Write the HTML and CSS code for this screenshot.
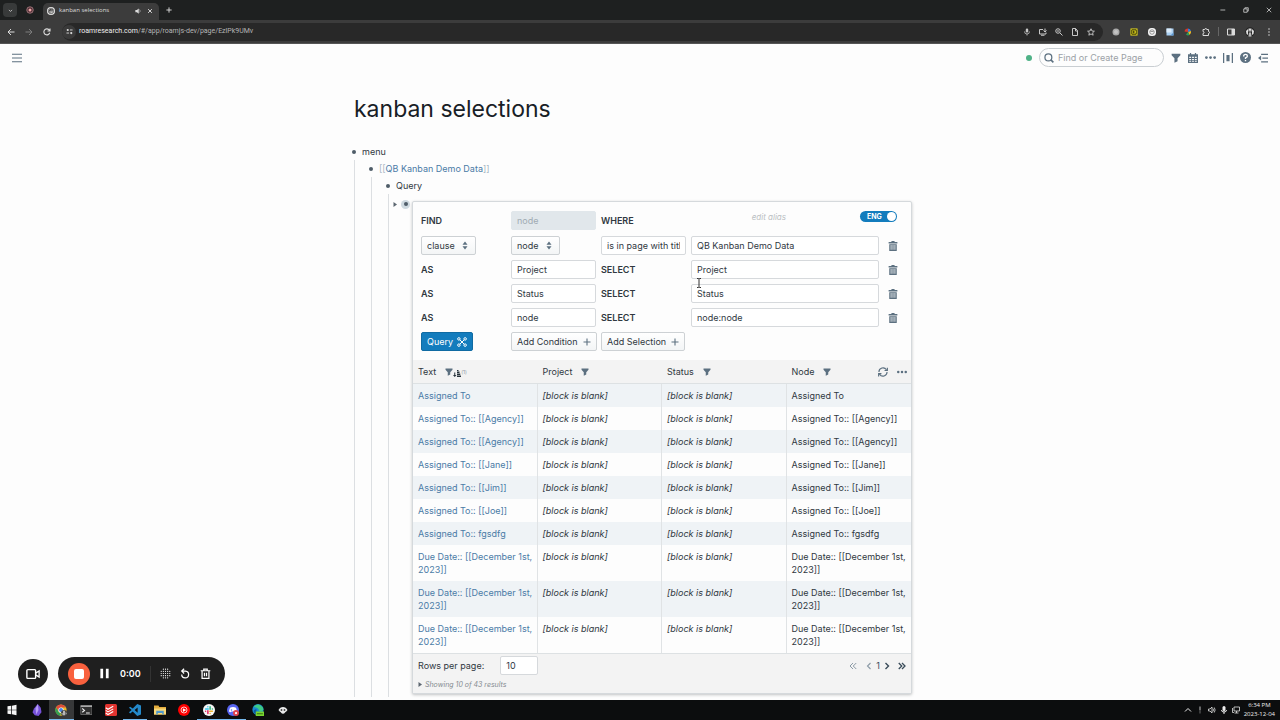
FILE: index.html
```html
<!DOCTYPE html>
<html lang="en">
<head>
<meta charset="utf-8">
<title>kanban selections</title>
<link rel="stylesheet" href="styles.css">
</head>
<body>
<svg class="defs" aria-hidden="true">
  <symbol id="filter" viewBox="0 0 16 16"><path fill="currentColor" d="M1 1h14v2.500L10.500 8.500V13l-5 2.500V8.500L1 3.500z"/></symbol>
  <symbol id="more" viewBox="0 0 16 16"><g fill="currentColor"><circle cx="2" cy="8" r="2"/><circle cx="8" cy="8" r="2"/><circle cx="14" cy="8" r="2"/></g></symbol>
  <symbol id="trash" viewBox="0 0 16 16"><path fill="currentColor" fill-rule="evenodd" d="M5.500 0h5v1.500H15V4H1V1.500h4.500zM2 5h12v11H2zM4.300 6.500v7.500h1.200V6.500zm3.100 0v7.500h1.200V6.500zm3.100 0v7.500h1.200V6.500z"/></symbol>
  <symbol id="updown" viewBox="0 0 10 16"><path fill="currentColor" d="M5 1l4.500 5.500h-9zM5 15L.5 9.500h9z"/></symbol>
  <symbol id="plus" viewBox="0 0 16 16"><path fill="none" stroke="currentColor" stroke-width="2.200" d="M8 1v14M1 8h14"/></symbol>
  <symbol id="left" viewBox="0 0 16 16"><path fill="none" stroke="currentColor" stroke-width="2.200" d="M11 2L5 8l6 6"/></symbol>
  <symbol id="right" viewBox="0 0 16 16"><path fill="none" stroke="currentColor" stroke-width="2.800" d="M5 2l6 6-6 6"/></symbol>
  <symbol id="dleft" viewBox="0 0 16 16"><path fill="none" stroke="currentColor" stroke-width="2" d="M8 2L2 8l6 6M14.500 2l-6 6 6 6"/></symbol>
  <symbol id="dright" viewBox="0 0 16 16"><path fill="none" stroke="currentColor" stroke-width="2.600" d="M1.500 2l6 6-6 6M8 2l6 6-6 6"/></symbol>
  <symbol id="caret" viewBox="0 0 8 10"><path fill="currentColor" d="M1 0l7 5-7 5z"/></symbol>
</svg>

<header class="browser">
  <div class="tabs">
    <button class="tab-search" aria-label="Search tabs"><svg viewBox="0 0 16 16"><path fill="none" stroke="currentColor" stroke-width="2.500" d="M3 6l5 5 5-5"/></svg></button>
    <svg class="pinned" viewBox="0 0 16 16"><circle cx="8" cy="8" r="6.500" fill="#4d2c32" stroke="#b98b90" stroke-width="1.500"/><circle cx="8" cy="8" r="3" fill="#f1a5a8"/></svg>
    <div class="tab">
      <svg class="favicon" viewBox="0 0 16 16"><circle cx="8" cy="8" r="8" fill="#e8e8e8"/><circle cx="8" cy="8" r="5.500" fill="none" stroke="#555" stroke-width="1.500"/><path stroke="#222" stroke-width="1.500" fill="none" d="M4 6h8M6 6v6M10 4v7M4 9l4-5"/></svg>
      <span class="tab-title">kanban selections</span>
      <svg class="ico-xs" viewBox="0 0 16 16"><path fill="currentColor" d="M1 5h4l5-4v14l-5-4H1z"/><path fill="none" stroke="currentColor" stroke-width="1.500" d="M12 4q4 4 0 8"/></svg>
      <button class="tab-close" aria-label="Close tab"><svg viewBox="0 0 16 16"><path stroke="currentColor" stroke-width="2.500" d="M3 3l10 10M13 3L3 13"/></svg></button>
    </div>
    <button class="tab-new" aria-label="New tab"><svg viewBox="0 0 16 16"><path stroke="currentColor" stroke-width="2.500" d="M8 1v14M1 8h14"/></svg></button>
    <div class="window-buttons">
      <button aria-label="Minimize"><svg viewBox="0 0 16 16"><path stroke="currentColor" stroke-width="2" d="M1 8h13"/></svg></button>
      <button aria-label="Restore"><svg viewBox="0 0 16 16"><path fill="none" stroke="currentColor" stroke-width="2" d="M2 5h9v9H2zM5 5V2h9v9h-3"/></svg></button>
      <button aria-label="Close"><svg viewBox="0 0 16 16"><path stroke="currentColor" stroke-width="2" d="M2 2l12 12M14 2L2 14"/></svg></button>
    </div>
  </div>
  <div class="toolbar">
    <div class="nav">
      <button aria-label="Back"><svg viewBox="0 0 16 16"><path fill="none" stroke="currentColor" stroke-width="2" d="M15 8H2M8 2L2 8l6 6"/></svg></button>
      <button class="dim" aria-label="Forward"><svg viewBox="0 0 16 16"><path fill="none" stroke="currentColor" stroke-width="2" d="M1 8h13M8 2l6 6-6 6"/></svg></button>
      <button aria-label="Reload"><svg viewBox="0 0 16 16"><path fill="none" stroke="currentColor" stroke-width="2.200" d="M13.500 9.500A6 6 0 1 1 12 3.500L14 6M14 1v5H9"/></svg></button>
    </div>
    <div class="urlbar">
      <span class="site"><svg viewBox="0 0 16 16"><path stroke="currentColor" stroke-width="2" d="M9 4.500h6M1 11.500h6"/><circle cx="4" cy="4.500" r="2.500" fill="currentColor"/><circle cx="12" cy="11.500" r="2.500" fill="currentColor"/></svg></span>
      <span class="url"><b>roamresearch.com</b>/#/app/roamjs-dev/page/EzlPk9UMv</span>
      <div class="url-icons">
        <svg viewBox="0 0 16 16"><rect x="5.500" y="1" width="5" height="8" rx="2.500" fill="currentColor"/><path fill="none" stroke="currentColor" stroke-width="1.500" d="M3 7q0 5 5 5t5-5M8 12v3"/></svg>
        <svg viewBox="0 0 16 16"><path fill="none" stroke="currentColor" stroke-width="2" d="M8 3H1v9h13V9M4 14.500h7M12 1v6M9 5l3 3 3-3"/></svg>
        <svg viewBox="0 0 16 16"><path fill="none" stroke="currentColor" stroke-width="2" d="M9.500 9.500L15 15M4 6h4"/><circle cx="6" cy="6" r="4.500" fill="none" stroke="currentColor" stroke-width="2"/></svg>
        <svg viewBox="0 0 16 16"><path fill="none" stroke="currentColor" stroke-width="2" d="M3 1h6l4 4v10H3zM9 1v5h4"/></svg>
        <svg viewBox="0 0 16 16"><path fill="none" stroke="currentColor" stroke-width="1.800" d="M8 1.500l2 4.500 4.800.4-3.600 3.200 1.100 4.800L8 11.900l-4.300 2.500 1.100-4.800L1.200 6.400 6 6z"/></svg>
      </div>
    </div>
    <div class="extensions">
      <svg viewBox="0 0 16 16"><circle cx="8" cy="8" r="7" fill="#aaa"/><circle cx="8" cy="8" r="4" fill="#c4c4c4"/></svg>
      <svg viewBox="0 0 16 16"><path fill="#f2e61c" d="M1 1h14v14H1z"/><path fill="none" stroke="#29280a" stroke-width="1.800" d="M3.500 3.500h9v9h-9zM6.500 5v6M7 8l3-3M7 8l3 3"/></svg>
      <svg viewBox="0 0 16 16"><rect width="16" height="16" rx="7" fill="#f4f4f4"/><circle cx="8" cy="8" r="4.500" fill="none" stroke="#777" stroke-width="1.500"/><path stroke="#777" stroke-width="1.500" d="M5 7h6"/></svg>
      <svg viewBox="0 0 16 16"><path fill="#a9cff2" d="M1 1h14v14H1z"/><path fill="#dcecfb" d="M1 1h10v8H1z"/><path fill="#5793cf" d="M9 15l6-6v6z"/></svg>
      <svg viewBox="0 0 16 16"><path fill="#d8382c" d="M1 7a7 7 0 0 1 7-6v7z"/><path fill="#2f7de1" d="M8 1a7 7 0 0 1 6 5L8 8z"/><path fill="#f4bd22" d="M14 6q1 5-3 8L8 8z"/><path fill="#2e9d57" d="M11 14q-4 2-7-1l4-5z"/></svg>
      <svg viewBox="0 0 16 16"><path fill="none" stroke="currentColor" stroke-width="2" d="M2 3h3.500a2 2 0 0 1 4 0H13v4a2 2 0 0 1 0 4v4H2v-4a2 2 0 0 0 0-4z"/></svg>
      <span class="divider"></span>
      <svg viewBox="0 0 16 16"><path fill="none" stroke="currentColor" stroke-width="2" d="M1 2h14v12H1z"/><path fill="currentColor" d="M9 2h6v12H9z"/></svg>
      <svg class="avatar" viewBox="0 0 20 20"><circle cx="10" cy="10" r="9.500" fill="#202020"/><path fill="#ddd" d="M7 3h6v6H7zM2 8l4-4v12l-3-2zM14 4l4 4-1 6-3 2zM8 11h4l1 8H7z"/><path fill="#444" d="M9.500 6h1v12h-1z"/></svg>
      <svg viewBox="0 0 16 16"><g fill="currentColor"><circle cx="8" cy="2" r="1.500"/><circle cx="8" cy="8" r="1.500"/><circle cx="8" cy="14" r="1.500"/></g></svg>
    </div>
  </div>
</header>

<div class="page">
  <nav class="topbar">
    <button aria-label="Open menu"><svg viewBox="0 0 16 16"><path stroke="currentColor" stroke-width="1.800" d="M0 2h16M0 8h16M0 14h16"/></svg></button>
    <div class="topbar-right">
      <span class="status-dot"></span>
      <label class="search"><svg viewBox="0 0 16 16"><circle cx="7" cy="7" r="5.500" fill="none" stroke="currentColor" stroke-width="2"/><path stroke="currentColor" stroke-width="2.500" d="M11 11l4 4"/></svg><input type="text" placeholder="Find or Create Page" aria-label="Find or Create Page"></label>
      <button aria-label="Filter"><svg><use href="#filter"/></svg></button>
      <button aria-label="Calendar"><svg viewBox="0 0 16 16"><path fill="currentColor" fill-rule="evenodd" d="M0 2h3V0h2v2h6V0h2v2h3v14H0zM2 6v2h3V6zm4.500 0v2h3V6zM11 6v2h3V6zM2 9.500v1.500h3V9.500zm4.500 0v1.500h3V9.500zm4.500 0v1.500h3V9.500zM2 12.500V14h3v-1.500zm4.500 0V14h3v-1.500zm4.500 0V14h3v-1.500z"/></svg></button>
      <button class="wide" aria-label="More"><svg><use href="#more"/></svg></button>
      <button aria-label="Distribute"><svg viewBox="0 0 16 16"><path fill="currentColor" d="M0 0h2v16H0zM14 0h2v16h-2zM5.500 3h5v10h-5z"/></svg></button>
      <button class="wide" aria-label="Help"><svg viewBox="0 0 16 16"><circle cx="8" cy="8" r="8" fill="currentColor"/><path fill="none" stroke="#fff" stroke-width="2" d="M5.300 6.500q0-3 2.700-3t2.700 2.300Q10.700 7.500 8 8.500v1.500M8 11.500v2"/></svg></button>
      <button aria-label="Open right sidebar"><svg viewBox="0 0 16 16"><path fill="none" stroke="currentColor" stroke-width="2" d="M5 2h11M7 8h9M5 14h11"/><path fill="currentColor" d="M0 8l5-4v8z"/></svg></button>
    </div>
  </nav>

  <main class="article">
    <h1>kanban selections</h1>
    <ul class="blocks">
      <li>
        <div class="block"><span class="bullet"></span>menu</div>
        <ul>
          <li>
            <div class="block"><span class="bullet"></span><span><span class="brackets">[[</span><a href="#">QB Kanban Demo Data</a><span class="brackets">]]</span></span></div>
            <ul>
              <li>
                <div class="block"><span class="bullet"></span>Query</div>
                <ul class="query-children">
                  <li class="query-block">
                    <div class="handle"><svg class="caret"><use href="#caret"/></svg><span class="halo"><span class="bullet"></span></span></div>
                    <section class="panel">
                      <form class="builder">
                        <b>FIND</b>
                        <input type="text" value="node" disabled aria-label="Find">
                        <b>WHERE</b>
                        <div class="alias-row"><span class="alias">edit alias</span><label class="switch"><input type="checkbox" checked><span>ENG</span></label></div>

                        <span class="select"><select aria-label="Condition type"><option>clause</option></select><svg><use href="#updown"/></svg></span>
                        <span class="select"><select aria-label="Source"><option>node</option></select><svg><use href="#updown"/></svg></span>
                        <input type="text" value="is in page with title" aria-label="Relation">
                        <input type="text" value="QB Kanban Demo Data" aria-label="Target">
                        <button type="button" class="trash" aria-label="Delete"><svg><use href="#trash"/></svg></button>

                        <b>AS</b><input type="text" value="Project" aria-label="As"><b>SELECT</b>
                        <div class="field"><input type="text" value="Project" aria-label="Select"><svg class="ibeam" viewBox="0 0 6 10"><path fill="none" stroke="#333" d="M1 .5h1.500l.5.500.5-.5H5M3 1v8M1 9.500h1.500L3 9l.5.500H5"/></svg></div>
                        <button type="button" class="trash" aria-label="Delete"><svg><use href="#trash"/></svg></button>

                        <b>AS</b><input type="text" value="Status" aria-label="As"><b>SELECT</b><input type="text" value="Status" aria-label="Select">
                        <button type="button" class="trash" aria-label="Delete"><svg><use href="#trash"/></svg></button>

                        <b>AS</b><input type="text" value="node" aria-label="As"><b>SELECT</b><input type="text" value="node:node" aria-label="Select">
                        <button type="button" class="trash" aria-label="Delete"><svg><use href="#trash"/></svg></button>

                        <button type="button" class="btn primary">Query <svg viewBox="0 0 16 16"><g fill="none" stroke="currentColor" stroke-width="1.600"><circle cx="3" cy="3" r="2"/><circle cx="13" cy="3" r="2"/><circle cx="3" cy="13" r="2"/><circle cx="13" cy="13" r="2"/><path d="M4.500 4.500l7 7M11.500 4.500l-7 7"/></g></svg></button>
                        <button type="button" class="btn">Add Condition <svg><use href="#plus"/></svg></button>
                        <button type="button" class="btn">Add Selection <svg><use href="#plus"/></svg></button>
                      </form>
                      <table class="results">
                        <thead>
                          <tr>
                            <th><div class="head">Text <span class="sort"><svg><use href="#filter"/></svg><svg class="sort-icon" viewBox="0 0 16 16"><path fill="#26323b" d="M2.500 7h2v5h2.500l-3.500 4L0 12h2.500zM8 13h8v3H8zM8 9h6.500v3H8zM8 5h5v3H8zM8 2h3v2H8z"/></svg><small>(1)</small></span></div></th>
                            <th><div class="head">Project <svg><use href="#filter"/></svg></div></th>
                            <th><div class="head">Status <svg><use href="#filter"/></svg></div></th>
                            <th><div class="head">Node <svg><use href="#filter"/></svg><span class="table-tools"><button type="button" aria-label="Refresh"><svg viewBox="0 0 16 16"><path fill="none" stroke="currentColor" stroke-width="1.800" d="M1.500 8A6.500 6.500 0 0 1 13.500 4.500M14.500 8A6.500 6.500 0 0 1 2.500 11.500M15 1v4.500h-4.500M1 15v-4.500h4.500"/></svg></button><button type="button" aria-label="More"><svg><use href="#more"/></svg></button></span></div></th>
                          </tr>
                        </thead>
                        <tbody>
                          <tr><td><a href="#">Assigned To</a></td><td><i>[block is blank]</i></td><td><i>[block is blank]</i></td><td>Assigned To</td></tr>
                          <tr><td><a href="#">Assigned To:: [[Agency]]</a></td><td><i>[block is blank]</i></td><td><i>[block is blank]</i></td><td>Assigned To:: [[Agency]]</td></tr>
                          <tr><td><a href="#">Assigned To:: [[Agency]]</a></td><td><i>[block is blank]</i></td><td><i>[block is blank]</i></td><td>Assigned To:: [[Agency]]</td></tr>
                          <tr><td><a href="#">Assigned To:: [[Jane]]</a></td><td><i>[block is blank]</i></td><td><i>[block is blank]</i></td><td>Assigned To:: [[Jane]]</td></tr>
                          <tr><td><a href="#">Assigned To:: [[Jim]]</a></td><td><i>[block is blank]</i></td><td><i>[block is blank]</i></td><td>Assigned To:: [[Jim]]</td></tr>
                          <tr><td><a href="#">Assigned To:: [[Joe]]</a></td><td><i>[block is blank]</i></td><td><i>[block is blank]</i></td><td>Assigned To:: [[Joe]]</td></tr>
                          <tr><td><a href="#">Assigned To:: fgsdfg</a></td><td><i>[block is blank]</i></td><td><i>[block is blank]</i></td><td>Assigned To:: fgsdfg</td></tr>
                          <tr><td><a href="#">Due Date:: [[December 1st, 2023]]</a></td><td><i>[block is blank]</i></td><td><i>[block is blank]</i></td><td>Due Date:: [[December 1st, 2023]]</td></tr>
                          <tr><td><a href="#">Due Date:: [[December 1st, 2023]]</a></td><td><i>[block is blank]</i></td><td><i>[block is blank]</i></td><td>Due Date:: [[December 1st, 2023]]</td></tr>
                          <tr><td><a href="#">Due Date:: [[December 1st, 2023]]</a></td><td><i>[block is blank]</i></td><td><i>[block is blank]</i></td><td>Due Date:: [[December 1st, 2023]]</td></tr>
                        </tbody>
                      </table>
                      <footer class="panel-foot">
                        <div class="paging">
                          <label for="rows">Rows per page:</label>
                          <input id="rows" type="text" value="10">
                          <div class="pager">
                            <button type="button" class="off first" aria-label="First page"><svg><use href="#dleft"/></svg></button>
                            <button type="button" class="off" aria-label="Previous page"><svg><use href="#left"/></svg></button>
                            <span>1</span>
                            <button type="button" aria-label="Next page"><svg><use href="#right"/></svg></button>
                            <button type="button" class="last" aria-label="Last page"><svg><use href="#dright"/></svg></button>
                          </div>
                        </div>
                        <div class="summary"><svg class="caret"><use href="#caret"/></svg><i>Showing 10 of 43 results</i></div>
                      </footer>
                    </section>
                  </li>
                </ul>
              </li>
            </ul>
          </li>
        </ul>
      </li>
    </ul>
  </main>

  <div class="recorder">
    <button class="camera" aria-label="Camera"><svg viewBox="0 0 16 16"><rect x="1" y="3" width="10" height="10" rx="1" fill="none" stroke="currentColor" stroke-width="1.600"/><path fill="none" stroke="currentColor" stroke-width="1.500" d="M11 7l4-2.500v7L11 9"/></svg></button>
    <div class="record-bar">
      <button class="stop" aria-label="Stop recording"><span></span></button>
      <button class="pause" aria-label="Pause"><svg viewBox="0 0 16 16"><path fill="currentColor" d="M2 1h4v14H2zM10 1h4v14h-4z"/></svg></button>
      <span class="time">0:00</span>
      <span class="split"></span>
      <button aria-label="Effects"><svg viewBox="0 0 18 18"><path fill="none" stroke="currentColor" stroke-width="2" stroke-linecap="round" stroke-dasharray="0 3.500" d="M5.500 2h8M2 5.500h15M2 9h15M2 12.500h15M5.500 16h8"/></svg></button>
      <button aria-label="Restart"><svg viewBox="0 0 16 16"><path fill="none" stroke="currentColor" stroke-width="1.800" d="M3 4.500h5a5 5 0 1 1-5.500 5M6 1L2.500 4.500 6 8"/></svg></button>
      <button aria-label="Discard"><svg viewBox="0 0 16 16"><path fill="none" stroke="currentColor" stroke-width="1.800" d="M1 4h14M5.500 4V1.500h5V4M3 4v11h10V4M6.500 7v5M9.500 7v5"/></svg></button>
    </div>
  </div>
</div>

<footer class="taskbar">
  <div class="apps">
    <button aria-label="Start"><svg viewBox="0 0 16 16"><path fill="#f5f5f5" d="M2 3l5-.7v5.300H2zM8 2.200L14 1v6.600H8zM2 8.400h5v5.300L2 13zM8 8.400h6V15l-6-1.200z"/></svg></button>
    <button aria-label="Obsidian"><svg viewBox="0 0 16 16"><path fill="#7650d8" d="M9 0l4 5 1 6-4 5-5-1-3-4 2-5z"/><path fill="#b49bf5" d="M9 0L6 6l1 8 3-6z"/></svg></button>
    <button class="active open" aria-label="Chrome"><svg viewBox="0 0 16 16"><circle cx="8" cy="8" r="7.500" fill="#e8b92a"/><path fill="#de4b3b" d="M1.500 4.200A7.500 7.500 0 0 1 14.500 4.500H8L4.700 9.800z"/><path fill="#35a153" d="M1.300 4.500L6 11.500l2 1-1.500 3A7.500 7.500 0 0 1 1.300 4.500z"/><circle cx="8" cy="8" r="3.500" fill="#fff"/><circle cx="8" cy="8" r="2.600" fill="#4285e8"/><circle cx="12" cy="12" r="4" fill="#444"/><path fill="#ddd" d="M11 9h2v6h-2zM8.500 12h1.500v3zM14 11l1.500 1-1 3z"/></svg></button>
    <button aria-label="Terminal"><svg viewBox="0 0 16 16"><path fill="#303030" stroke="#777" d="M1 2h15v12H1z"/><path fill="#aaa" d="M1 2h15v2H1z"/><path fill="none" stroke="#eee" stroke-width="1.500" d="M3 6l3 2.500L3 11M8 12h5"/></svg></button>
    <button aria-label="Todoist"><svg viewBox="0 0 16 16"><rect width="16" height="16" rx="2" fill="#e2332f"/><path fill="none" stroke="#fff" stroke-width="1.500" d="M1 5l3 2 7-4M1 8.500l3 2 7-4M1 12l3 2 7-4"/></svg></button>
    <button class="open" aria-label="Visual Studio Code"><svg viewBox="0 0 16 16"><path fill="#2489ca" fill-rule="evenodd" d="M11 0l5 2v12l-5 2-6-6-3.500 2.500L0 11l3.500-3L0 5l1.500-1.500L5 6zM11.500 4.500L7.500 8l4 3.500z"/></svg></button>
    <button aria-label="File Explorer"><svg viewBox="0 0 16 16"><path fill="#e3ac3d" d="M0 2h6l1 2h9v10H0z"/><path fill="#f8d879" d="M0 6h16v8H0z"/><path fill="#4d98ce" d="M3 9h10v5h-2v-2H5v2H3z"/></svg></button>
    <button aria-label="YouTube Music"><svg viewBox="0 0 16 16"><circle cx="8" cy="8" r="8" fill="#f00"/><circle cx="8" cy="8" r="4" fill="none" stroke="#fff"/><path fill="#fff" d="M6.500 5.500L11 8l-4.500 2.500z"/></svg></button>
    <button class="open" aria-label="Slack"><svg viewBox="0 0 16 16"><circle cx="8" cy="8" r="8" fill="#f7f7f7"/><g fill="none" stroke-width="2" stroke-linecap="round"><path stroke="#36c5f0" d="M3.500 6.500H7M6.500 3.500v.1"/><path stroke="#2eb67d" d="M9.500 3.500V7M12.500 6.500v.1"/><path stroke="#ecb22e" d="M12.500 9.500H9M9.500 12.500v.1"/><path stroke="#e01e5a" d="M6.500 12.500V9M3.500 9.500v.1"/></g></svg></button>
    <button class="open" aria-label="Discord"><svg viewBox="0 0 16 16"><circle cx="8" cy="8" r="8" fill="#5865f2"/><path fill="#fff" d="M4 5q4-2 8 0l1.500 5-2.500 1-1-1H6l-1 1-2.500-1z"/><circle cx="6" cy="8" r="1" fill="#5865f2"/><circle cx="12" cy="12" r="4" fill="#e0434b"/><circle cx="12" cy="12" r="1.500" fill="#fff"/></svg></button>
    <button aria-label="Edge"><svg viewBox="0 0 16 16"><circle cx="8" cy="7.500" r="7.500" fill="#1b8bd0"/><path fill="#3ecb84" d="M2 4q6-7 12 0 3 5-2 6-4 0-3-3-2-3-7-3z"/><path fill="#0b59a3" d="M6 7q-1 5 4 7-6 1-8-4 0-3 4-3z"/><path fill="#79d42f" d="M5 10h11v6H5z"/><path stroke="#24520f" d="M6.500 13h8"/></svg></button>
    <button aria-label="Roam"><svg viewBox="0 0 16 16"><path fill="#e8e8e8" d="M2 8q2-4 6-4t6 4q-1 2-3 3-3 4-6 0-2-1-3-3z"/><path fill="#222" d="M5 7h2v2H5zM9 7h2v2H9z"/></svg></button>
  </div>
  <div class="tray">
    <svg viewBox="0 0 16 16"><path fill="none" stroke="currentColor" stroke-width="2" d="M2 11l6-6 6 6"/></svg>
    <svg class="dim" viewBox="0 0 16 16"><path fill="currentColor" d="M6 1h4v8H6zM7 10h2v5H7z"/></svg>
    <svg viewBox="0 0 16 16"><path fill="none" stroke="currentColor" stroke-width="1.500" d="M1 6h3l4-4v12l-4-4H1zM10 5q2 3 0 6M12.500 3q3.500 5 0 10"/></svg>
    <svg viewBox="0 0 16 16"><rect x="5" y="0" width="6" height="10" rx="3" fill="currentColor"/><path fill="none" stroke="currentColor" stroke-width="2" d="M3 8q0 4 5 4t5-4M8 12v4"/></svg>
    <svg viewBox="0 0 16 16"><path fill="none" stroke="currentColor" stroke-width="1.500" d="M4 2h11v8H4zM9 10v4M5 14h8M1 4v9h3"/></svg>
    <div class="clock"><time>6:34 PM</time><time>2023-12-04</time></div>
  </div>
</footer>
</body>
</html>
```
FILE: styles.css
```css
* { box-sizing: border-box; }
body {
  margin: 0;
  height: 100vh;
  display: flex;
  flex-direction: column;
  overflow: hidden;
  font: 9px/13px Inter, "Liberation Sans", sans-serif;
  color: #30383f;
  background: #fdfdfd;
}
button, input, select { font: inherit; color: inherit; margin: 0; }
button { border: 0; padding: 0; background: none; display: flex; align-items: center; justify-content: center; }
svg { display: block; width: 10px; height: 10px; flex: none; }
a { color: #4a7ba6; text-decoration: none; }
ul { list-style: none; margin: 0; padding: 0; }
.defs { position: absolute; width: 0; height: 0; }

/* Browser chrome */
.browser { background: #1e2020; color: #dcdcdc; font-family: "Open Sans", sans-serif; border-bottom: 1px solid #555; }
.tabs { height: 20px; display: flex; align-items: center; padding-left: 3px; }
.tab-search { width: 14px; height: 14px; border-radius: 4px; background: #383a3a; }
.tab-search svg { width: 5px; height: 5px; }
.pinned { width: 8px; height: 8px; margin: 0 9px; }
.tab { align-self: flex-end; width: 116px; height: 17px; display: flex; align-items: center; gap: 4px; padding: 0 4px 2px; background: #3c3c3c; border-radius: 5px 5px 0 0; }
.favicon { width: 8px; height: 8px; }
.tab-title { font-size: 6px; flex: 1; white-space: nowrap; }
.ico-xs { width: 6px; height: 6px; }
.tab-close { width: 10px; height: 10px; }
.tab-close svg, .tab-new svg, .window-buttons svg { width: 6px; height: 6px; }
.tab-new { width: 20px; height: 20px; }
.window-buttons { margin-left: auto; display: flex; }
.window-buttons button { width: 23px; height: 20px; }
.toolbar { height: 23px; background: #3c3c3c; display: flex; align-items: center; gap: 6px; padding: 0 7px 0 2px; }
.nav { display: flex; }
.nav button { width: 18px; height: 18px; }
.nav svg { width: 8px; height: 8px; }
.dim { opacity: .4; }
.urlbar { flex: 1; height: 18px; border-radius: 9px; background: #282828; display: flex; align-items: center; gap: 3px; padding: 0 8px 0 0; }
.site { width: 14px; height: 14px; border-radius: 7px; background: #3a3a3a; display: flex; align-items: center; justify-content: center; }
.site svg { width: 7px; height: 7px; }
.url { flex: 1; font-family: Roboto, sans-serif; font-size: 7px; color: #b5b5b5; }
.url b { font-weight: 400; color: #efefef; }
.url-icons { display: flex; gap: 8px; color: #c8c8c8; }
.url-icons svg, .extensions svg { width: 8px; height: 8px; }
.extensions { display: flex; align-items: center; gap: 10px; padding-left: 3px; }
.extensions .avatar { width: 10px; height: 10px; }
.divider { width: 1px; height: 9px; background: #666; margin: 0 -2px; }

/* Page */
.page { flex: 1; min-height: 0; display: flex; flex-direction: column; position: relative; overflow: hidden; }
.topbar { height: 27px; flex: none; display: flex; align-items: center; justify-content: space-between; padding: 0 12px; color: #5c7080; }
.topbar-right { display: flex; align-items: center; gap: 7px; }
.topbar .wide svg { width: 11px; height: 11px; }
.status-dot { width: 6px; height: 6px; border-radius: 3px; background: #4fb287; }
.search { width: 125px; height: 19px; border: 1px solid #c9ced2; border-radius: 10px; display: flex; align-items: center; gap: 4px; padding: 0 4px; }
.search input { width: 100%; min-width: 0; border: 0; padding: 0; background: none; outline: 0; }
.search input::placeholder { color: #9ba1a6; opacity: 1; }
.article { flex: 1; width: 100%; max-width: 576px; margin: 0 auto; padding-right: 16px; }
h1 { margin: 0; padding: 22px 2px 18px; font-size: 23px; line-height: 32px; font-weight: 400; color: #182026; }
.block { height: 17px; display: flex; align-items: center; gap: 6px; }
.bullet { flex: none; width: 4px; height: 4px; border-radius: 2px; background: #4f5d68; }
.blocks ul { margin-left: 2px; padding-left: 14px; border-left: 1px solid #dcdfe2; }
.blocks .query-children { padding-left: 4px; padding-bottom: 3px; }
.brackets { color: #a7b6c2; }
.query-block { display: flex; padding-top: 7px; gap: 2px; }
.handle { display: flex; align-items: center; align-self: flex-start; gap: 4px; height: 6px; }
.caret { width: 4px; height: 5px; color: #5c6670; }
.halo { width: 9px; height: 9px; border-radius: 5px; background: #ced9e0; display: flex; align-items: center; justify-content: center; }

/* Query builder */
.panel { flex: 1; min-width: 0; border: 1px solid #d5d9dc; border-radius: 2px; background: #fdfdfd; box-shadow: 0 1px 3px rgba(16, 22, 26, .25); }
.builder { display: grid; grid-template-columns: 85px 85px 85px 1fr 18px; gap: 5px; padding: 8px 9px 9px 8px; align-items: center; }
.builder b { font-weight: 600; }
.builder input[type="text"], .paging input { display: block; width: 100%; height: 19px; border: 1px solid #d6d9dc; border-radius: 2px; padding: 0 5px; background: #fff; outline: 0; }
.builder input[type="text"]:disabled { background: #e1e7eb; border-color: #e1e7eb; color: #a0abb3; }
.alias-row { grid-column: 4 / 6; height: 21px; display: flex; align-items: flex-start; justify-content: flex-end; gap: 74px; padding: 1px 5px 0 0; }
.alias { font-size: 8px; line-height: 12px; font-style: italic; color: #bbbfc3; }
.switch { position: relative; width: 37px; height: 11px; border-radius: 6px; background: #137cbd; color: #fff; font-size: 7px; line-height: 11px; font-weight: 700; padding-left: 7px; }
.switch input { appearance: none; position: absolute; right: 1px; top: 1px; width: 9px; height: 9px; border-radius: 5px; background: #fff; }
.select { position: relative; justify-self: start; }
.select select { appearance: none; display: block; height: 19px; padding: 0 20px 0 5px; border: 1px solid #cdd1d4; border-radius: 2px; background: linear-gradient(#fff, #f3f5f6); }
.select svg { position: absolute; right: 8px; top: 5px; width: 6px; height: 9px; color: #5c7080; pointer-events: none; }
.trash { color: #5c7080; }
.field { position: relative; }
.ibeam { position: absolute; left: 5px; top: 18px; width: 6px; height: 10px; z-index: 1; }
.btn { justify-self: start; height: 19px; padding: 0 5px; gap: 5px; white-space: nowrap; border: 1px solid #cdd1d4; border-radius: 2px; background: linear-gradient(#fff, #f3f5f6); }
.btn svg { width: 8px; height: 8px; color: #5c7080; }
.btn.primary { gap: 4px; background: #137cbd; border-color: #106ba3; color: #fff; }
.btn.primary svg { width: 10px; height: 10px; color: #fff; }

/* Results */
.results { width: 100%; table-layout: fixed; border-collapse: separate; border-spacing: 0; }
.results th { height: 24px; padding: 0 4px 0 5px; background: #f3f3f3; border-bottom: 1px solid #dde1e3; font-weight: 400; text-align: left; }
.head { display: flex; align-items: center; gap: 9px; }
.head svg { width: 8px; height: 8px; color: #5c7080; }
.sort { display: flex; align-items: center; }
.sort .sort-icon { align-self: flex-end; margin-top: 3px; }
.sort small { font-size: 5px; line-height: 6px; color: #8a949c; }
.head .table-tools { margin-left: auto; display: flex; gap: 9px; }
.head .table-tools svg { width: 10px; height: 10px; }
.results td { padding: 5px 2px 5px 5px; vertical-align: top; border-right: 1px solid #e0e3e5; }
.results td:last-child { border-right: 0; }
.results tbody tr:nth-child(odd) { background: #eff3f6; }
.panel-foot { background: #f3f3f3; border-top: 1px solid #dde1e3; padding: 2px 5px 2px; }
.paging { display: flex; align-items: center; gap: 16px; }
.paging input { width: 38px; }
.pager { margin-left: auto; display: flex; align-items: center; gap: 3px; color: #394b59; }
.pager svg { width: 8px; height: 8px; }
.pager .off { color: #8a99a5; }
.first { margin-right: 5px; }
.last { margin-left: 4px; }
.summary { display: flex; align-items: center; gap: 3px; margin-top: 3px; font-size: 7px; color: #858b91; }

/* Screen recorder */
.recorder { position: absolute; left: 18px; bottom: 10px; display: flex; align-items: center; gap: 10px; color: #fff; }
.recorder button { flex: none; }
.camera { width: 30px; height: 30px; border-radius: 15px; background: #1f1f1f; }
.camera svg { width: 14px; height: 14px; }
.record-bar { height: 33px; border-radius: 17px; background: #1f1f1f; display: flex; align-items: center; gap: 9px; padding: 0 14px 0 10px; }
.stop { width: 22px; height: 22px; border-radius: 11px; background: #f9613e; }
.stop span { width: 10px; height: 10px; border-radius: 2px; background: #fff; }
.time { font-size: 9px; font-weight: 600; margin-left: 1px; }
.split { width: 1px; height: 16px; background: #333; }
.record-bar svg { width: 11px; height: 11px; }

/* Taskbar */
.taskbar { height: 20px; flex: none; display: flex; justify-content: space-between; background: #0c0d0e; color: #eee; }
.apps { width: 295px; display: flex; }
.apps button { flex: 1; border-bottom: 1px solid transparent; }
.apps svg { width: 12px; height: 12px; }
.apps .active { background: #373839; }
.apps .open { border-bottom-color: #76b9ed; }
.tray { display: flex; align-items: center; gap: 4px; padding-right: 5px; font-family: "Open Sans", sans-serif; }
.tray svg { width: 8px; height: 8px; }
.clock { display: flex; flex-direction: column; align-items: center; font-size: 6px; line-height: 9px; }
```
